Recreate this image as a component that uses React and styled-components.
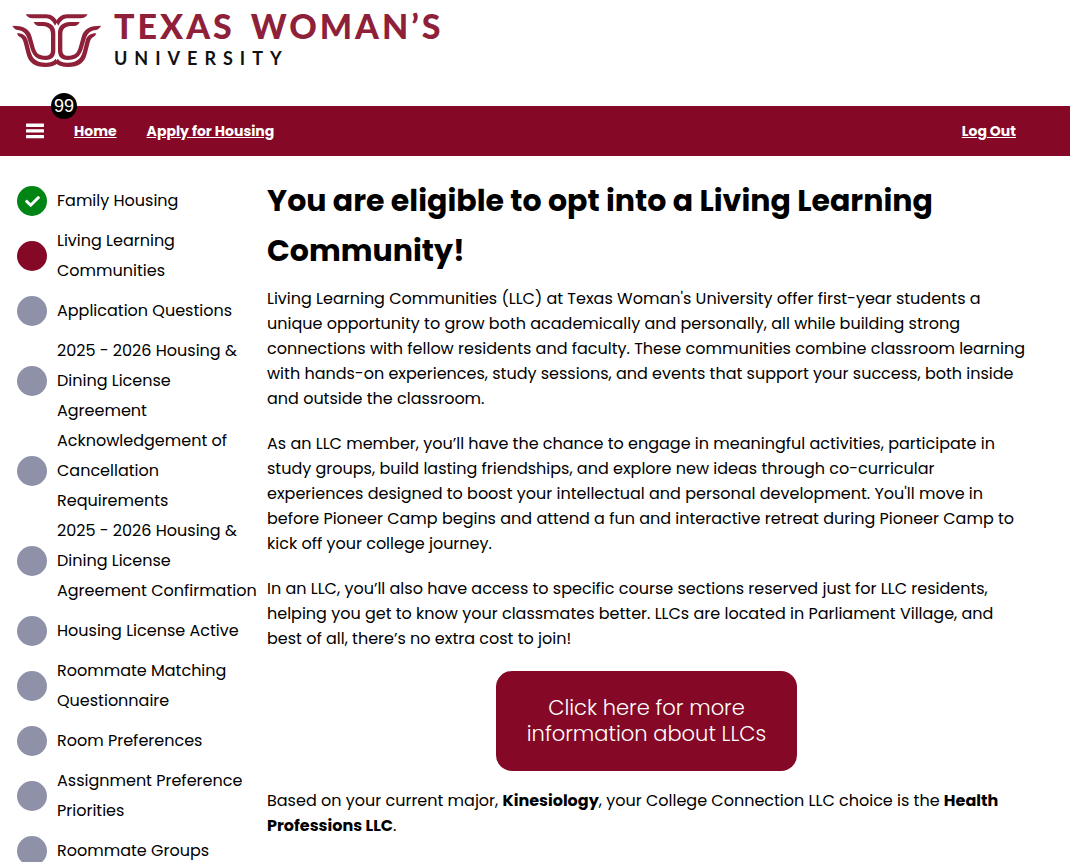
import React from "react";
import styled, { createGlobalStyle } from "styled-components";
import { FaCheck } from "react-icons/fa";

const steps = [
  { label: "Family Housing", state: "done" },
  { label: "Living Learning Communities", state: "current" },
  { label: "Application Questions" },
  { label: "2025 - 2026 Housing & Dining License Agreement", joined: true },
  { label: "Acknowledgement of Cancellation Requirements", joined: true },
  { label: "2025 - 2026 Housing & Dining License Agreement Confirmation" },
  { label: "Housing License Active" },
  { label: "Roommate Matching Questionnaire" },
  { label: "Room Preferences" },
  { label: "Assignment Preference Priorities" },
  { label: "Roommate Groups" },
];

const stepColors = {
  done: "#008515",
  current: "#850926",
  todo: "#8e91a8",
};

const LogoWing = () => (
  <>
    <path d="M75 42 L136 42 C154 42 164 52 170 64 L163 76 C156 62 148 54 134 54 L96 54 C86 54 80 50 75 42 Z" />
    <path d="M99 65 L128 65 C152 66 164 78 164 100 L164 150 C164 170 154 179 136 179 C110 179 97 168 90 146 L81 116 C76 98 66 91 50 89 C43 87 38 83 35 76 C68 76 86 84 93 110 L102 142 C107 160 116 166 134 166 C146 166 151 160 151 148 L151 102 C151 86 143 78 126 77 L116 77 C108 77 103 73 99 65 Z" />
    <path d="M49 99 C67 99 78 106 82 124 L89 152 C95 176 108 187 134 187 C150 187 159 183 165 175 L172 187 C163 196 151 200 134 200 C102 200 84 188 77 158 L70 130 C67 118 64 114 59 111 C54 109 51 105 49 99 Z" />
  </>
);

const Logo = () => (
  <LogoLink href="#home" aria-label="Texas Woman's University">
    <svg width="90" height="54" viewBox="34 41 270 162" fill="#8e2139">
      <LogoWing />
      <g transform="translate(336 0) scale(-1 1)">
        <LogoWing />
      </g>
    </svg>
    <LogoText>
      <LogoName>
        <span>TEXAS</span> <span>WOMAN’S</span>
      </LogoName>
      <LogoSub>UNIVERSITY</LogoSub>
    </LogoText>
  </LogoLink>
);

const BarsIcon = () => (
  <svg width="18" height="16" viewBox="0 0 18 16" fill="currentColor">
    <rect y="0.5" width="18" height="3.4" rx="0.6" />
    <rect y="6.2" width="18" height="3.4" rx="0.6" />
    <rect y="11.9" width="18" height="3.4" rx="0.6" />
  </svg>
);

const App = () => {
  return (
    <>
      <GlobalStyle />
      <HeaderStyled>
        <Logo />
      </HeaderStyled>
      <NavStyled>
        <MenuButton type="button" aria-label="Menu">
          <BarsIcon />
          <MenuBadge>99</MenuBadge>
        </MenuButton>
        <NavLink href="#home">Home</NavLink>
        <NavLink href="#apply">Apply for Housing</NavLink>
        <LogOutLink href="#logout">Log Out</LogOutLink>
      </NavStyled>
      <PageStyled>
        <StepList>
          {steps.map((step) => (
            <StepItem key={step.label} $joined={step.joined}>
              <StepDot $state={step.state || "todo"}>
                {step.state === "done" && <FaCheck size={15} />}
              </StepDot>
              <StepLink href="#step">{step.label}</StepLink>
            </StepItem>
          ))}
        </StepList>
        <ContentStyled>
          <TitleStyled>
            You are eligible to opt into a Living Learning Community!
          </TitleStyled>
          <Paragraph>
            Living Learning Communities (LLC) at Texas Woman's University offer
            first-year students a unique opportunity to grow both academically
            and personally, all while building strong connections with fellow
            residents and faculty. These communities combine classroom learning
            with hands-on experiences, study sessions, and events that support
            your success, both inside and outside the classroom.
          </Paragraph>
          <Paragraph>
            As an LLC member, you’ll have the chance to engage in meaningful
            activities, participate in study groups, build lasting friendships,
            and explore new ideas through co-curricular experiences designed to
            boost your intellectual and personal development. You'll move in
            before Pioneer Camp begins and attend a fun and interactive retreat
            during Pioneer Camp to kick off your college journey.
          </Paragraph>
          <Paragraph>
            In an LLC, you’ll also have access to specific course sections
            reserved just for LLC residents, helping you get to know your
            classmates better. LLCs are located in Parliament Village, and best
            of all, there’s no extra cost to join!
          </Paragraph>
          <InfoButton type="button">
            Click here for more information about LLCs
          </InfoButton>
          <Paragraph>
            Based on your current major, <b>Kinesiology</b>, your College
            Connection LLC choice is the <b>Health Professions LLC</b>.
          </Paragraph>
        </ContentStyled>
      </PageStyled>
    </>
  );
};

const GlobalStyle = createGlobalStyle`
  * {
    box-sizing: border-box;
  }
  body {
    margin: 0;
    background: #fff;
    color: #000;
    font-family: Poppins, Inter, sans-serif;
    font-size: 16px;
  }
`;

const HeaderStyled = styled.header`
  padding: 14px 12px 35px;
`;
const LogoLink = styled.a`
  display: flex;
  gap: 12px;
  text-decoration: none;
`;
const LogoText = styled.div`
  display: flex;
  flex-direction: column;
  gap: 7px;
  font-family: Lato, sans-serif;
  font-weight: 700;
`;
const LogoName = styled.span`
  display: flex;
  gap: 16px;
  color: #8e2139;
  font-size: 34px;
  font-weight: 900;
  line-height: 24px;
  letter-spacing: 3px;
`;
const LogoSub = styled.span`
  color: #111;
  font-size: 18px;
  line-height: 26px;
  letter-spacing: 7px;
`;
const NavStyled = styled.nav`
  display: flex;
  align-items: center;
  gap: 30px;
  height: 50px;
  padding: 0 54px 0 26px;
  background: #850926;
`;
const MenuButton = styled.button`
  position: relative;
  display: flex;
  padding: 0;
  border: 0;
  background: none;
  color: #fff;
  cursor: pointer;
`;
const MenuBadge = styled.span`
  position: absolute;
  left: 25px;
  bottom: 20px;
  width: 26px;
  height: 26px;
  border-radius: 50%;
  background: #000;
  font-family: "Liberation Sans", Arial, sans-serif;
  font-size: 18px;
  line-height: 26px;
  text-align: center;
`;
const NavLink = styled.a`
  color: #fff;
  font-size: 14px;
  font-weight: 700;
`;
const LogOutLink = styled(NavLink)`
  margin-left: auto;
`;
const PageStyled = styled.div`
  display: grid;
  grid-template-columns: 240px 1fr;
  gap: 10px;
  padding: 20px 44px 0 17px;
`;
const StepList = styled.ol`
  margin: 0;
  padding: 10px 0 0;
  list-style: none;
`;
const StepItem = styled.li`
  display: flex;
  align-items: center;
  gap: 10px;
  margin-bottom: ${({ $joined }) => ($joined ? "0" : "10px")};
`;
const StepDot = styled.span`
  display: flex;
  flex: none;
  align-items: center;
  justify-content: center;
  width: 30px;
  height: 30px;
  border-radius: 50%;
  background: ${({ $state }) => stepColors[$state]};
  color: #fff;
`;
const StepLink = styled.a`
  color: inherit;
  line-height: 30px;
  text-decoration: none;
`;
const ContentStyled = styled.main`
  min-width: 0;
`;
const TitleStyled = styled.h1`
  margin: 0 0 10px;
  font-size: 30px;
  font-weight: 700;
  line-height: 50px;
`;
const Paragraph = styled.p`
  margin: 0 0 20px;
  line-height: 25px;
`;
const InfoButton = styled.button`
  display: block;
  width: 301px;
  margin: 0 auto 17px;
  padding: 24px;
  border: 0;
  border-radius: 16px;
  background: #850926;
  color: #fff;
  font-family: inherit;
  font-size: 21px;
  font-weight: 300;
  line-height: 26px;
  cursor: pointer;
`;

export default App;
